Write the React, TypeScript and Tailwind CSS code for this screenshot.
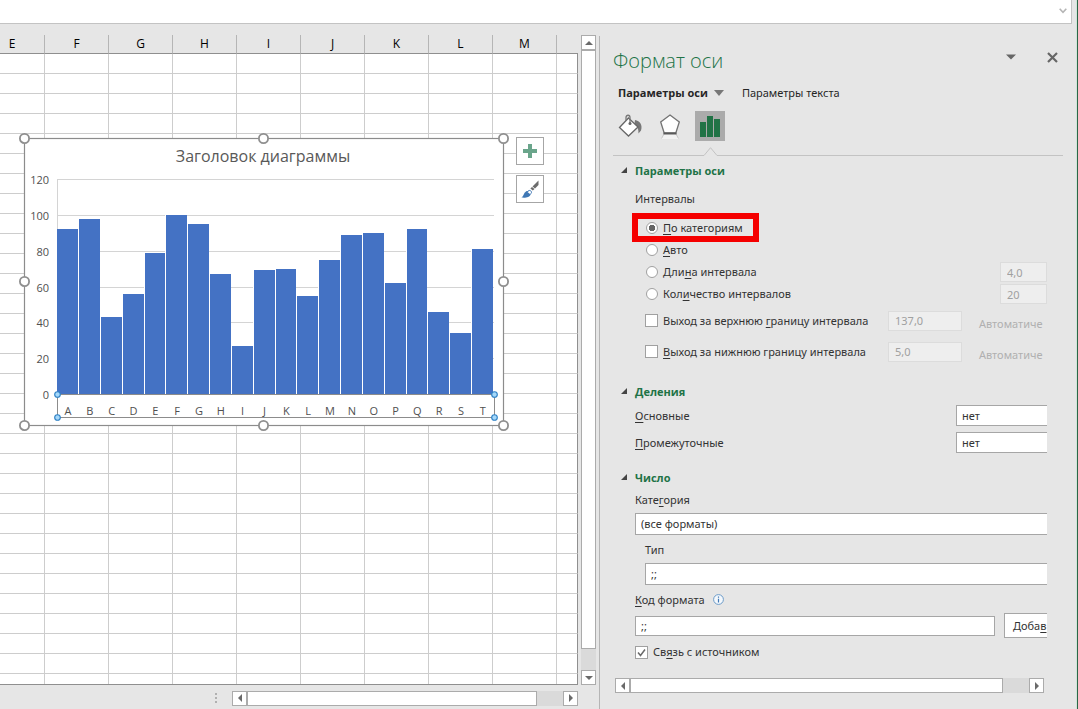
import React from "react";
import type { ReactNode } from "react";

const COLUMNS = ["E", "F", "G", "H", "I", "J", "K", "L", "M", ""];
const ROWS = Array.from({ length: 32 }, (_, i) => i);

const BARS: [string, number][] = [
  ["A", 92], ["B", 98], ["C", 43], ["D", 56], ["E", 79],
  ["F", 100], ["G", 95], ["H", 67], ["I", 27], ["J", 69],
  ["K", 70], ["L", 55], ["M", 75], ["N", 89], ["O", 90],
  ["P", 62], ["Q", 92], ["R", 46], ["S", 34], ["T", 81],
];

const PLOT_LEFT = 37;
const PLOT_RIGHT = 474;
const PLOT_BOTTOM = 261;
const UNIT = 1.79;
const STEP = 21.84;

function Arrow({ dir }: { dir: "up" | "down" | "left" | "right" }) {
  const points = {
    up: "1,7 9,7 5,3",
    down: "1,3 9,3 5,7",
    left: "7,1 7,9 3,5",
    right: "3,1 3,9 7,5",
  }[dir];
  return (
    <svg viewBox="0 0 10 10" className="size-2.5 fill-[#6a6a6a]" aria-hidden="true">
      <polygon points={points} />
    </svg>
  );
}

function ScrollButton({ dir, label }: { dir: "up" | "down" | "left" | "right"; label: string }) {
  return (
    <button type="button" aria-label={label} className="flex size-[15px] shrink-0 items-center justify-center border border-[#ababab] bg-white">
      <Arrow dir={dir} />
    </button>
  );
}

function HorizontalScroll() {
  return (
    <div className="flex h-[15px] flex-1">
      <ScrollButton dir="left" label="Влево" />
      <div className="flex-1 border border-[#ababab] bg-white" />
      <div className="w-[26px] bg-[#dadada]" />
      <ScrollButton dir="right" label="Вправо" />
    </div>
  );
}

function Chart() {
  const handles = [
    [4.5, 5.5], [243.5, 5.5], [483.5, 5.5], [4.5, 148.5], [483.5, 148.5], [4.5, 292.5], [243.5, 292.5], [483.5, 292.5],
  ];
  const axisHandles = [
    [37.5, 261.5], [474.5, 261.5], [37.5, 284.5], [474.5, 284.5],
  ];
  return (
    <svg width="491" height="299" viewBox="-1 0 491 299" className="font-['Open_Sans',sans-serif]" role="img" aria-label="Заголовок диаграммы">
      <rect x="4.5" y="5.5" width="479" height="287" fill="#fff" stroke="#8c8c8c" strokeWidth="1.2" />
      <text x="243" y="29" textAnchor="middle" fontSize="16" fill="#595959">Заголовок диаграммы</text>
      <g shapeRendering="crispEdges">
        {[20, 40, 60, 80, 100, 120].map((v) => (
          <rect key={v} x={PLOT_LEFT} y={Math.round(PLOT_BOTTOM - v * UNIT)} width={PLOT_RIGHT - PLOT_LEFT} height="1" fill="#d4d4d4" />
        ))}
        <rect x={PLOT_LEFT} y="46" width="1" height="215" fill="#d4d4d4" />
        {BARS.map(([name, v], i) => {
          const left = Math.floor(36.7 + i * STEP) + 1;
          const right = Math.floor(36.7 + (i + 1) * STEP);
          const top = Math.round(PLOT_BOTTOM - v * UNIT);
          return (
            <g key={name}>
              <rect x={left - 1} y={top} width="1" height={PLOT_BOTTOM - top} fill="#fff" />
              <rect x={left} y={top} width={right - left} height={PLOT_BOTTOM - top} fill="#4472c4" />
            </g>
          );
        })}
      </g>
      <rect x="37.5" y="261.5" width="437" height="23" fill="none" stroke="#8c8c8c" />
      {[0, 20, 40, 60, 80, 100, 120].map((v) => (
        <text key={v} x="29" y={Math.round(PLOT_BOTTOM - v * UNIT) + 5} textAnchor="end" fontSize="11" fill="#505050">{v}</text>
      ))}
      {BARS.map(([name], i) => (
        <text key={name} x={37 + (i + 0.5) * STEP} y="282" textAnchor="middle" fontSize="11" fill="#505050">{name}</text>
      ))}
      {axisHandles.map(([x, y]) => (
        <circle key={`${x}-${y}`} cx={x} cy={y} r="2.8" fill="#a5d8fa" stroke="#2b7fc4" strokeWidth="1.1" />
      ))}
      {handles.map(([x, y]) => (
        <circle key={`${x}-${y}`} cx={x} cy={y} r="4.6" fill="#fff" stroke="#8f8f8f" strokeWidth="1.8" />
      ))}
    </svg>
  );
}

function Sheet() {
  return (
    <div className="relative min-h-0 flex-1 overflow-hidden border-b border-[#8f8f8f]">
      <table className="w-full table-fixed border-separate border-spacing-0 bg-white">
        <thead>
          <tr>
            {COLUMNS.map((c, i) => (
              <th
                key={i}
                className={`h-[19px] border-b border-[#8f8f8f] bg-[#e6e6e6] p-0 text-[12px] leading-4 font-normal text-black ${
                  i === 0 ? "w-[45px] border-r border-r-[#b5b5b5] pr-5" : c ? "w-16 border-r border-r-[#b5b5b5]" : ""
                }`}
              >
                {c}
              </th>
            ))}
          </tr>
        </thead>
        <tbody>
          {ROWS.map((r) => (
            <tr key={r}>
              {COLUMNS.map((c, i) => (
                <td key={i} className={`h-5 border-r border-b border-[#cdcdcd] p-0 ${c ? "" : "border-r-[#8f8f8f]"}`} />
              ))}
            </tr>
          ))}
        </tbody>
      </table>
      <div className="absolute top-[98px] left-[19px] flex items-start gap-1.5">
        <Chart />
        <div className="mt-1 flex flex-col gap-2.5">
          <button type="button" aria-label="Элементы диаграммы" className="flex size-7 items-center justify-center border border-[#a6a6a6] bg-white">
            <svg viewBox="0 0 14 14" className="size-3.5 fill-[#6aa58b]" aria-hidden="true">
              <path d="M5 0h4v5h5v4H9v5H5V9H0V5h5z" />
            </svg>
          </button>
          <button type="button" aria-label="Стили диаграмм" className="flex size-7 items-center justify-center border border-[#a6a6a6] bg-white">
            <svg viewBox="0 0 18 18" className="size-[18px]" aria-hidden="true">
              <path d="M17.500 0.500V5L14 8.500L11.500 6.500Z" fill="#6b6b6b" />
              <path d="M11 7L13.500 9L11.800 10.600L9.400 8.500Z" fill="#6b6b6b" />
              <path d="M0.500 17.500C3 16 2.500 13 5 11.500C7 10.300 9.800 12 9.500 14.200C9 17.500 4 18 0.500 17.500Z" fill="#3f78b5" />
              <path d="M6.500 12C7 10.500 8.500 10 9.700 10.800C11 11.800 10.600 13.500 9.300 14.200" fill="#fff" stroke="#3f78b5" />
            </svg>
          </button>
        </div>
      </div>
    </div>
  );
}

function U({ children }: { children: ReactNode }) {
  return <span className="underline underline-offset-2">{children}</span>;
}

function SectionTitle({ children }: { children: ReactNode }) {
  return (
    <h3>
      <button type="button" className="flex h-[22px] items-center gap-2 pl-2 font-['Open_Sans',sans-serif] font-bold text-[#217346]">
        <svg viewBox="0 0 6 6" className="mb-0.5 size-1.5 fill-[#444]" aria-hidden="true">
          <path d="M6 0V6H0Z" />
        </svg>
        {children}
      </button>
    </h3>
  );
}

function Radio({ id, checked, children }: { id: string; checked?: boolean; children: ReactNode }) {
  return (
    <label htmlFor={id} className="relative flex h-[22px] items-center gap-[5px]">
      <input
        id={id}
        type="radio"
        name="interval"
        defaultChecked={checked}
        className="size-3 appearance-none rounded-full border border-[#a0a0a0] bg-white checked:bg-[radial-gradient(circle,#666_0_3px,#fff_3px)]"
      />
      <span>{children}</span>
      {checked && <span className="pointer-events-none absolute -top-1 -right-4 -bottom-[3px] -left-[14px] border-6 border-[#f50000]" />}
    </label>
  );
}

function Check({ id, checked, children }: { id: string; checked?: boolean; children: ReactNode }) {
  return (
    <div className="flex items-center gap-[5px]">
      <span className="relative flex size-[13px]">
        <input id={id} type="checkbox" defaultChecked={checked} className="size-[13px] appearance-none border border-[#a0a0a0] bg-white" />
        {checked && (
          <svg viewBox="0 0 13 13" className="pointer-events-none absolute inset-0" aria-hidden="true">
            <path d="M3 6.500L5.500 9.500L10 3.500" fill="none" stroke="#6a6a6a" strokeWidth="1.500" />
          </svg>
        )}
      </span>
      <label htmlFor={id} className="whitespace-nowrap">{children}</label>
    </div>
  );
}

const disabledField = "h-5 border border-[#dcdcdc] bg-[#eeeeee] px-1.5 text-[#a0a0a0]";
const listField = "appearance-none rounded-none border border-r-0 border-[#a6a6a6] bg-white px-[5px]";

function FormatPane() {
  return (
    <aside className="flex w-[472px] shrink-0 flex-col pr-[9px] pl-[13px] font-['Noto_Sans',sans-serif] text-[11px] leading-4 text-[#333]">
      <header className="mt-[22px] flex h-[30px] items-center">
        <h2 className="flex-1 font-['Open_Sans',sans-serif] text-[20px] leading-[30px] font-light text-[#217346]">Формат оси</h2>
        <button type="button" aria-label="Параметры области задач" className="mr-[31px] mb-2 flex">
          <svg viewBox="0 0 10 6" className="h-1.5 w-2.5 fill-[#666]" aria-hidden="true"><path d="M0 0.500H10L5 5.500Z" /></svg>
        </button>
        <button type="button" aria-label="Закрыть" className="mr-[5px] mb-2 flex">
          <svg viewBox="0 0 11 11" className="size-[11px] stroke-[#666]" aria-hidden="true"><path d="M1 1L10 10M10 1L1 10" strokeWidth="2.200" /></svg>
        </button>
      </header>
      <nav className="mt-1.5 flex h-[22px] items-center pl-[5px] text-[#262626]">
        <button type="button" className="flex items-center gap-1.5 font-['Open_Sans',sans-serif] font-bold">
          Параметры оси
          <svg viewBox="0 0 10 6" className="h-1.5 w-2.5 fill-[#777]" aria-hidden="true"><path d="M0 0H10L5 6Z" /></svg>
        </button>
        <button type="button" className="ml-[18px]">Параметры текста</button>
      </nav>
      <div className="mt-[7px] flex h-[30px] items-center gap-2.5 pl-0.5">
        <button type="button" aria-label="Заливка и границы" className="flex size-[30px] items-center justify-center">
          <svg viewBox="0 0 26 24" className="h-6 w-[26px]" aria-hidden="true">
            <path d="M18 6C23 7 25.800 11 24 16.500L21.500 19.500C21.500 15.500 21 13 17.500 10Z" fill="#777" />
            <path d="M11.500 4L21 13L11.500 22L2.500 13.500Z" fill="#fff" stroke="#666" strokeWidth="1.300" />
            <path d="M9 7V3.500C9 0.500 13 0.500 13 3.500V9" fill="none" stroke="#777" strokeWidth="1.300" />
            <circle cx="13" cy="9.500" r="1.500" fill="#666" />
          </svg>
        </button>
        <button type="button" aria-label="Эффекты" className="flex size-[30px] items-center justify-center">
          <svg viewBox="0 0 22 25" className="h-[25px] w-[22px]" aria-hidden="true">
            <path d="M5 20H17L20 25H2Z" fill="#f3f3f3" />
            <path d="M5 20L2.500 24.500M17 20L19.500 24.500" stroke="#c6c6c6" />
            <path d="M11 1L20.300 8L16.800 19H5.200L1.700 8Z" fill="#fff" stroke="#737373" strokeWidth="1.300" />
            <path d="M4.500 19.500H17.500" stroke="#5a5a5a" strokeWidth="2" />
          </svg>
        </button>
        <button type="button" aria-label="Параметры оси" className="flex size-[30px] items-center justify-center bg-[#ababab]">
          <svg viewBox="0 0 20 21" className="h-[21px] w-5 fill-[#217346]" aria-hidden="true"><path d="M0 6H6V21H0ZM7 0H13V21H7ZM14 3H20V21H14Z" /></svg>
        </button>
      </div>
      <div className="mt-[6px] flex h-[9px] items-end">
        <div className="w-[91px] border-b border-[#c3c3c3]" />
        <svg viewBox="0 0 13 9" className="h-[9px] w-[13px]" aria-hidden="true"><path d="M0 8.500L6.500 0.700L13 8.500" fill="none" stroke="#c3c3c3" /></svg>
        <div className="flex-1 border-b border-[#c3c3c3]" />
      </div>

      <form className="mt-1 mr-4 flex flex-col" onSubmit={(e) => e.preventDefault()}>
        <SectionTitle>Параметры оси</SectionTitle>
        <fieldset className="pl-[22px]">
          <legend className="mb-[7px] pt-1.5 leading-[22px]">Интервалы</legend>
          <div className="flex flex-col items-start pl-[11px]">
            <Radio id="by-category" checked><U>П</U>о категориям</Radio>
            <Radio id="auto"><U>А</U>вто</Radio>
            <div className="flex w-full items-center justify-between">
              <Radio id="bin-width">Дли<U>н</U>а интервала</Radio>
              <input aria-label="Длина интервала" disabled defaultValue="4,0" className={`${disabledField} w-[47px]`} />
            </div>
            <div className="flex w-full items-center justify-between">
              <Radio id="bin-count">Кол<U>и</U>чество интервалов</Radio>
              <input aria-label="Количество интервалов" disabled defaultValue="20" className={`${disabledField} w-[47px]`} />
            </div>
          </div>
          <div className="flex h-[31px] items-center pl-2.5">
            <div className="flex-1"><Check id="overflow">Выход за верхнюю <U>г</U>раницу интервала</Check></div>
            <input aria-label="Верхняя граница" disabled defaultValue="137,0" className={`${disabledField} w-[74px]`} />
            <button type="button" disabled className="mt-1.5 ml-[17px] w-[68px] text-left whitespace-nowrap text-[#b0b0b0]">Автоматиче</button>
          </div>
          <div className="flex h-[31px] items-center pl-2.5">
            <div className="flex-1"><Check id="underflow"><U>В</U>ыход за нижнюю границу интервала</Check></div>
            <input aria-label="Нижняя граница" disabled defaultValue="5,0" className={`${disabledField} w-[74px]`} />
            <button type="button" disabled className="mt-1.5 ml-[17px] w-[68px] text-left whitespace-nowrap text-[#b0b0b0]">Автоматиче</button>
          </div>
        </fieldset>

        <div className="mt-3.5"><SectionTitle>Деления</SectionTitle></div>
        <div className="-mt-px flex flex-col pb-px pl-[22px]">
          <div className="flex h-[27px] items-center justify-between">
            <label htmlFor="major"><U>О</U>сновные</label>
            <select id="major" className={`${listField} h-[21px] w-[91px]`}><option>нет</option></select>
          </div>
          <div className="flex h-[27px] items-center justify-between">
            <label htmlFor="minor"><U>П</U>ромежуточные</label>
            <select id="minor" className={`${listField} h-[21px] w-[91px]`}><option>нет</option></select>
          </div>
        </div>

        <div className="mt-2.5"><SectionTitle>Число</SectionTitle></div>
        <div className="flex flex-col pl-[22px]">
          <label htmlFor="category" className="h-[22px] leading-[22px]">Кате<U>г</U>ория</label>
          <select id="category" className={`${listField} mt-0.5 h-[22px]`}><option>(все форматы)</option></select>
          <label htmlFor="type" className="mt-1 ml-2.5 h-[22px] leading-[22px]">Тип</label>
          <select id="type" className={`${listField} mt-0.5 ml-2.5 h-[22px]`}><option>;;</option></select>
          <div className="mt-1 flex h-[22px] items-center gap-2">
            <label htmlFor="code"><U>К</U>од формата</label>
            <svg viewBox="0 0 11 11" className="mb-0.5 size-[11px]" aria-hidden="true">
              <circle cx="5.500" cy="5.500" r="4.900" fill="#f4f8fc" stroke="#6c9bc8" />
              <path d="M5.500 4.700V8.500M5.500 2.500V3.800" stroke="#3f78b5" strokeWidth="1.200" />
            </svg>
          </div>
          <div className="mt-0.5 flex items-center gap-[9px]">
            <input id="code" defaultValue=";;" className="h-5 min-w-0 flex-1 border border-[#a6a6a6] bg-white px-[5px]" />
            <button type="button" className="h-[25px] w-[43px] border border-r-0 border-[#a6a6a6] bg-white pl-2 text-left whitespace-nowrap">Доба<U>в</U></button>
          </div>
          <div className="mt-[3px] flex h-[22px] items-center">
            <Check id="linked" checked>Св<U>я</U>зь с источником</Check>
          </div>
        </div>
      </form>
      <div className="mt-[15px] mr-[19px] ml-0.5 flex">
        <HorizontalScroll />
      </div>
    </aside>
  );
}

export default function App() {
  return (
    <div className="flex h-screen bg-[#e6e6e6] font-['Open_Sans','Noto_Sans',sans-serif]">
      <div className="flex min-w-0 flex-1 flex-col">
        <div className="flex h-6 shrink-0 items-start justify-end border-r border-b border-[#c3c3c3] bg-white pt-2 pr-1">
          <button type="button" aria-label="Развернуть строку формул" className="flex">
            <svg viewBox="0 0 8 6" className="h-1.5 w-2" aria-hidden="true"><path d="M0.700 0.700L4 4.300L7.300 0.700" fill="none" stroke="#b5b5b5" strokeWidth="1.600" /></svg>
          </button>
        </div>
        <div className="flex min-h-0 flex-1">
          <main className="flex min-w-0 flex-1 flex-col pt-[11px]">
            <div className="flex min-h-0 flex-1 gap-[3px] pr-[3px]">
              <Sheet />
              <div className="flex w-[15px] flex-col">
                <ScrollButton dir="up" label="Вверх" />
                <div className="flex-1 border border-[#ababab] bg-white" />
                <div className="h-[21px] bg-[#dadada]" />
                <ScrollButton dir="down" label="Вниз" />
              </div>
            </div>
            <div className="flex h-6 items-center pt-0.5 pr-[21px]">
              <div className="mr-[15px] ml-[215px] flex flex-col gap-0.5" aria-hidden="true">
                <span className="size-0.5 bg-[#b0b0b0]" />
                <span className="size-0.5 bg-[#b0b0b0]" />
                <span className="size-0.5 bg-[#b0b0b0]" />
              </div>
              <HorizontalScroll />
            </div>
          </main>
          <div className="mt-3 w-px bg-[#b5b5b5]" />
          <FormatPane />
        </div>
      </div>
      <div className="w-1" />
      <div className="w-px bg-[#cfe6d8]" />
      <div className="w-px bg-[#2d6548]" />
    </div>
  );
}
